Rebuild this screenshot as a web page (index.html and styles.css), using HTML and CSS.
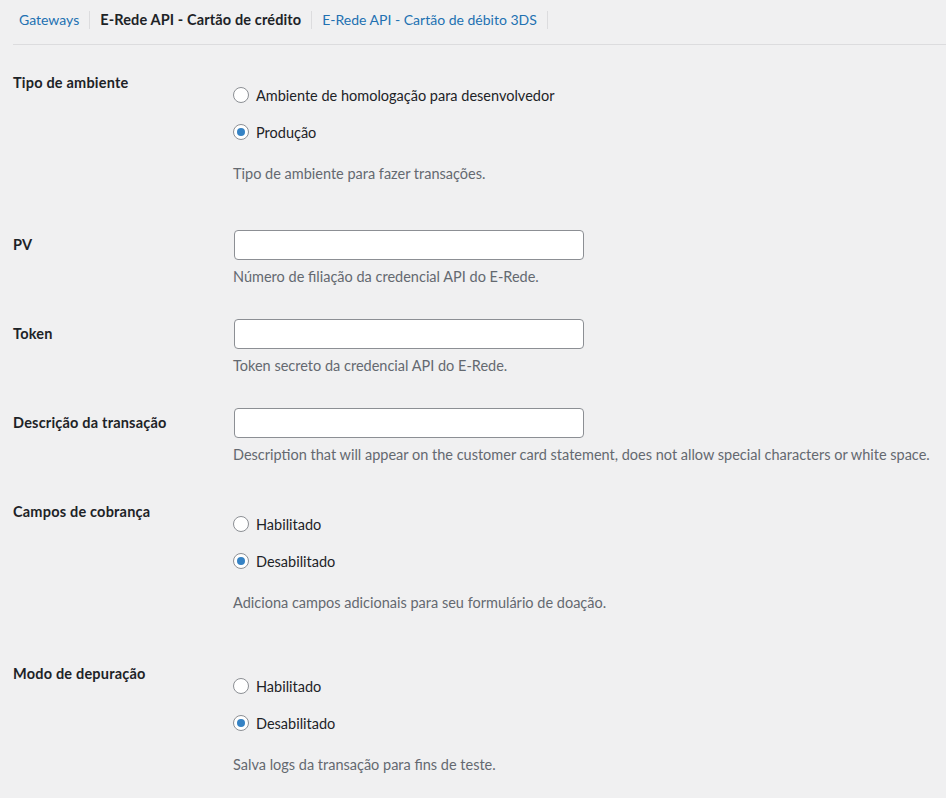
FILE: index.html
```html
<!DOCTYPE html>
<html lang="pt-BR">
<head>
<meta charset="utf-8">
<title>E-Rede API - Cartão de crédito</title>
<link rel="stylesheet" href="styles.css">
</head>
<body>
<div class="wrap">
  <ul class="tabs">
    <li><a href="#">Gateways</a></li>
    <li class="sep"></li>
    <li class="current">E-Rede API - Cartão de crédito</li>
    <li class="sep"></li>
    <li><a href="#">E-Rede API - Cartão de débito 3DS</a></li>
    <li class="sep"></li>
  </ul>
  <hr class="divider">
  <div class="form">
    <div class="row">
      <div class="th">Tipo de ambiente</div>
      <div class="td">
        <ul class="radios">
          <li><span class="radio"></span><span>Ambiente de homologação para desenvolvedor</span></li>
          <li><span class="radio checked"></span><span>Produção</span></li>
        </ul>
        <p class="desc desc-radio">Tipo de ambiente para fazer transações.</p>
      </div>
    </div>
    <div class="row">
      <div class="th">PV</div>
      <div class="td">
        <input class="text" type="text">
        <p class="desc">Número de filiação da credencial API do E-Rede.</p>
      </div>
    </div>
    <div class="row">
      <div class="th">Token</div>
      <div class="td">
        <input class="text" type="text">
        <p class="desc">Token secreto da credencial API do E-Rede.</p>
      </div>
    </div>
    <div class="row">
      <div class="th">Descrição da transação</div>
      <div class="td">
        <input class="text" type="text">
        <p class="desc">Description that will appear on the customer card statement, does not allow special characters or white space.</p>
      </div>
    </div>
    <div class="row">
      <div class="th">Campos de cobrança</div>
      <div class="td">
        <ul class="radios">
          <li><span class="radio"></span><span>Habilitado</span></li>
          <li><span class="radio checked"></span><span>Desabilitado</span></li>
        </ul>
        <p class="desc desc-radio">Adiciona campos adicionais para seu formulário de doação.</p>
      </div>
    </div>
    <div class="row">
      <div class="th">Modo de depuração</div>
      <div class="td">
        <ul class="radios">
          <li><span class="radio"></span><span>Habilitado</span></li>
          <li><span class="radio checked"></span><span>Desabilitado</span></li>
        </ul>
        <p class="desc desc-radio">Salva logs da transação para fins de teste.</p>
      </div>
    </div>
  </div>
</div>
</body>
</html>
```
FILE: styles.css
```css
html, body {
  margin: 0;
  padding: 0;
  background: #f0f0f1;
}
body {
  font-family: Lato, "Noto Sans", sans-serif;
  font-size: 14.5px;
  color: #3c434a;
}
.wrap {
  padding-left: 13px;
}
.tabs {
  list-style: none;
  margin: 0;
  padding: 11px 0 0 6px;
  display: flex;
  align-items: center;
  height: 18px;
  font-size: 14px;
}
.tabs li {
  line-height: 18px;
}
.tabs a {
  color: #2271b1;
  text-decoration: none;
}
.tabs .current {
  color: #1d2327;
  font-weight: 700;
  font-size: 14.5px;
  letter-spacing: 0.13px;
}
.tabs .sep {
  width: 1px;
  height: 18px;
  background: #dcdcde;
  margin: 0 10px;
}
.divider {
  border: 0;
  border-top: 1px solid #dcdcde;
  margin: 15px 0 0 0;
  height: 0;
}
.form {
  padding-top: 8px;
}
.row {
  display: flex;
}
.th {
  width: 200px;
  padding: 21px 10px 19px 0;
  font-weight: 700;
  letter-spacing: 0.2px;
  color: #1d2327;
  line-height: 18px;
}
.td {
  padding: 15px 10px;
  flex: 1;
}
.text {
  display: block;
  box-sizing: border-box;
  width: 350px;
  height: 30px;
  margin: 0 0 0 1px;
  border: 1px solid #8c8f94;
  border-radius: 4px;
  background: #fff;
  padding: 0 8px;
}
.radios {
  list-style: none;
  margin: 15px 0 0;
  padding: 0;
}
.radios li {
  display: flex;
  align-items: center;
  gap: 7px;
  height: 24px;
  color: #1d2327;
}
.radios li + li {
  margin-top: 13px;
}
.radio {
  box-sizing: border-box;
  width: 16px;
  height: 16px;
  border: 1px solid #8c8f94;
  border-radius: 50%;
  background: #fff;
  display: flex;
  align-items: center;
  justify-content: center;
}
.radio.checked::before {
  content: "";
  width: 8px;
  height: 8px;
  border-radius: 50%;
  background: #3582c4;
}
.desc {
  margin: 6px 0 2px;
  line-height: 21px;
  color: #646970;
}
.desc-radio {
  margin: 19px 0 16px;
}
```
